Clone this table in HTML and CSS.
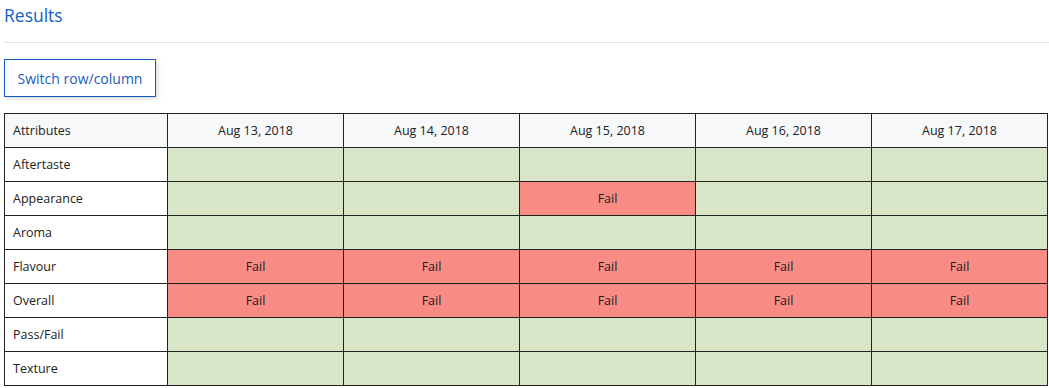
FILE: index.html
```html
<!DOCTYPE html>
<html>
<head>
<meta charset="utf-8">
<link rel="stylesheet" href="styles.css">
</head>
<body>
<div class="page">
  <h1 class="title">Results</h1>
  <div class="divider"></div>
  <button class="switch-btn">Switch row/column</button>
  <table class="results">
    <thead>
      <tr>
        <th class="attr">Attributes</th>
        <th>Aug 13, 2018</th>
        <th>Aug 14, 2018</th>
        <th>Aug 15, 2018</th>
        <th>Aug 16, 2018</th>
        <th>Aug 17, 2018</th>
      </tr>
    </thead>
    <tbody>
      <tr><td class="attr">Aftertaste</td><td class="pass"></td><td class="pass"></td><td class="pass"></td><td class="pass"></td><td class="pass"></td></tr>
      <tr><td class="attr">Appearance</td><td class="pass"></td><td class="pass"></td><td class="fail">Fail</td><td class="pass"></td><td class="pass"></td></tr>
      <tr><td class="attr">Aroma</td><td class="pass"></td><td class="pass"></td><td class="pass"></td><td class="pass"></td><td class="pass"></td></tr>
      <tr><td class="attr">Flavour</td><td class="fail">Fail</td><td class="fail">Fail</td><td class="fail">Fail</td><td class="fail">Fail</td><td class="fail">Fail</td></tr>
      <tr><td class="attr">Overall</td><td class="fail">Fail</td><td class="fail">Fail</td><td class="fail">Fail</td><td class="fail">Fail</td><td class="fail">Fail</td></tr>
      <tr><td class="attr">Pass/Fail</td><td class="pass"></td><td class="pass"></td><td class="pass"></td><td class="pass"></td><td class="pass"></td></tr>
      <tr><td class="attr">Texture</td><td class="pass"></td><td class="pass"></td><td class="pass"></td><td class="pass"></td><td class="pass"></td></tr>
    </tbody>
  </table>
</div>
</body>
</html>
```

FILE: styles.css
```css
html, body {
  margin: 0;
  padding: 0;
  background: #ffffff;
}
body {
  font-family: "Open Sans", "Noto Sans", sans-serif;
  color: #222222;
}
.page {
  padding: 0 1px 0 4px;
  display: flex;
  flex-direction: column;
  align-items: flex-start;
}
.title {
  margin: 0;
  padding-top: 3px;
  height: 30px;
  font-size: 17.5px;
  font-weight: 400;
  line-height: 24px;
  color: #1560c4;
}
.divider {
  align-self: stretch;
  margin-right: -1px;
  margin-top: 9px;
  height: 1px;
  background: #e2e2e2;
}
.switch-btn {
  margin-top: 16px;
  width: 152px;
  height: 38px;
  padding: 0;
  background: #ffffff;
  border: 1px solid #1a5bbf;
  border-radius: 0;
  box-shadow: 2px 2px 4px rgba(0, 0, 0, 0.15);
  font-family: inherit;
  font-size: 14px;
  color: #1a5bbf;
}
.results {
  margin-top: 16px;
  width: 1044px;
  border-collapse: collapse;
  table-layout: fixed;
  font-size: 12.5px;
}
.results th, .results td {
  border: 1px solid #222222;
  height: 34px;
  padding: 0 8px;
  box-sizing: border-box;
  font-weight: 400;
  text-align: center;
  color: #222222;
}
.results th {
  background: #f7f8fa;
}
.results .attr {
  width: 163px;
  text-align: left;
}
.results td.attr {
  background: #ffffff;
}
.results td.pass {
  background: #d8e5c7;
}
.results td.fail {
  background: #f98b85;
}
```
